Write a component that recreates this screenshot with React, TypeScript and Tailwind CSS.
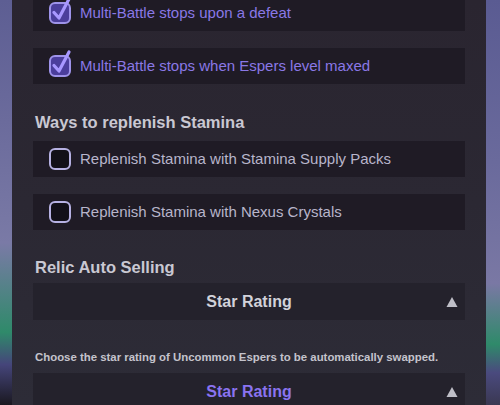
import React from "react";

type OptionRowProps = {
  label: string;
  checked?: boolean;
};

const CheckBox = ({ checked }: { checked?: boolean }) => (
  <svg width="22" height="22" viewBox="0 0 22 22" className="shrink-0 overflow-visible">
    <rect
      x="1"
      y="1"
      width="20"
      height="20"
      rx="5"
      fill={checked ? "#4b3e9c" : "#121018"}
      stroke={checked ? "#9e93ea" : "#b6b1e2"}
      strokeWidth="2"
    />
    {checked && (
      <path
        d="M5 10.5 L10 16 L20 -3"
        fill="none"
        stroke="#a898ff"
        strokeWidth="3.2"
        strokeLinecap="round"
        strokeLinejoin="round"
      />
    )}
  </svg>
);

const OptionRow = ({ label, checked }: OptionRowProps) => (
  <div className="flex h-[36px] items-center gap-[9px] bg-[#1f1b25] pl-4">
    <CheckBox checked={checked} />
    <span
      className={
        checked
          ? "text-[15px] text-[#8a78e6]"
          : "text-[15px] text-[#b8b5cb]"
      }
    >
      {label}
    </span>
  </div>
);

const Heading = ({ children }: { children: React.ReactNode }) => (
  <p className="pl-[2px] text-[16.5px] leading-[20px] font-bold text-[#c9c8d2]">
    {children}
  </p>
);

const Dropdown = ({ text, active }: { text: string; active?: boolean }) => (
  <div className="relative flex h-[37px] shrink-0 items-center justify-center bg-[#24222c]">
    <span
      className={
        active
          ? "text-[16px] font-bold text-[#8a73f0]"
          : "text-[16px] font-bold text-[#d2d2da]"
      }
    >
      {text}
    </span>
    <svg
      width="12"
      height="11"
      viewBox="0 0 12 11"
      className="absolute right-[7px] top-1/2 -translate-y-1/2"
    >
      <path d="M6 0.5 L11.5 10.5 L0.5 10.5 Z" fill="#bfbfc8" />
    </svg>
  </div>
);

export default function App() {
  return (
    <div
      className="flex h-[405px] w-[500px] overflow-hidden"
      style={{ fontFamily: '"Liberation Sans", Arial, sans-serif' }}
    >
      <div className="w-[12px] shrink-0 bg-[linear-gradient(180deg,#5d5e93_0%,#6b6b9c_30%,#7a7aa6_60%,#2f8a6a_82%,#45457a_90%,#1a1820_100%)]" />
      <div className="flex flex-1 flex-col bg-[linear-gradient(180deg,#2a2530_0%,#2b2833_50%,#2d2c37_100%)] px-[21px]">
        <div className="-mt-[5px] flex flex-col">
          <OptionRow label="Multi-Battle stops upon a defeat" checked />
          <div className="mt-[17px]">
            <OptionRow label="Multi-Battle stops when Espers level maxed" checked />
          </div>
          <div className="mt-[28px] mb-[9px]">
            <Heading>Ways to replenish Stamina</Heading>
          </div>
          <OptionRow label="Replenish Stamina with Stamina Supply Packs" />
          <div className="mt-[17px]">
            <OptionRow label="Replenish Stamina with Nexus Crystals" />
          </div>
          <div className="mt-[27px] mb-[6px]">
            <Heading>Relic Auto Selling</Heading>
          </div>
          <Dropdown text="Star Rating" />
          <p className="mt-[30px] mb-[9px] pl-[2px] text-[11.4px] leading-[14px] font-bold text-[#c4c3cc]">
            Choose the star rating of Uncommon Espers to be automatically swapped.
          </p>
          <Dropdown text="Star Rating" active />
        </div>
      </div>
      <div className="w-[14px] shrink-0 bg-[linear-gradient(180deg,#5a5b92_0%,#6a6a9c_40%,#7a78a4_70%,#2f8a6a_85%,#4a4a7e_92%,#3a3852_100%)]" />
    </div>
  );
}
